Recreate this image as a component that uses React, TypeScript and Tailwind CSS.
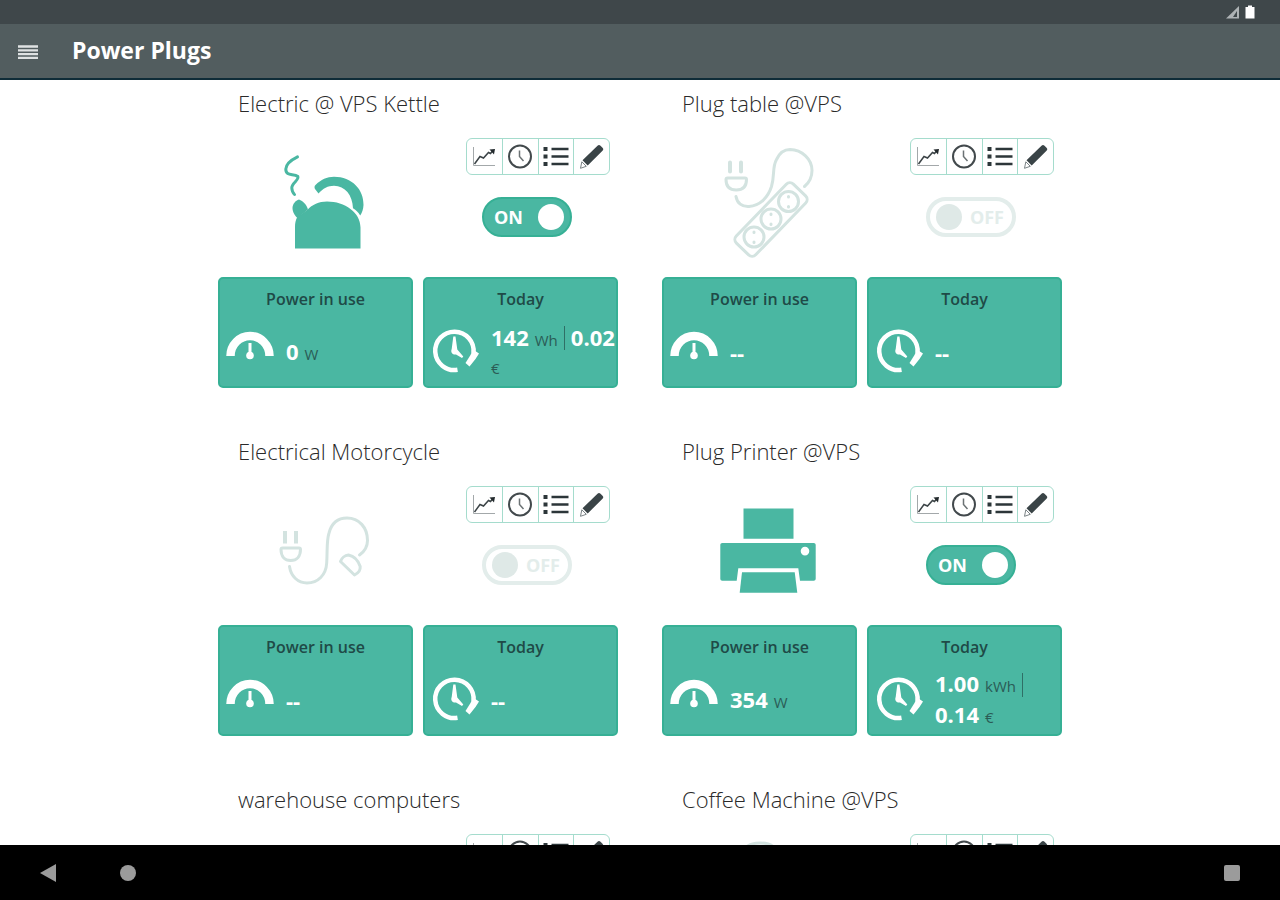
import type { ReactNode } from 'react';

type Part = { value?: string; unit?: string; bar?: boolean };

type Status = { on: boolean; power: Part[][]; today: Part[][] };

// status stays empty until the plug has answered
type Device = { name: string; icon?: ReactNode; status?: Status };

const none: Part[][] = [[{ value: '--' }]];

const Drawing = ({ on, children }: { on: boolean; children: ReactNode }) => (
    <svg viewBox="0 0 120 120" className={`h-[120px] w-[120px] ${on ? 'text-[#4ab7a2]' : 'text-[#d3e3e0]'}`} fill="none" aria-hidden="true">
        {children}
    </svg>
);

const Kettle = () => (
    <Drawing on>
        <path d="M33.5 13.8C27 17 22 21 21.8 26c0 8 8 4 12 7.5C35.5 37 27.5 40 27.8 45c.2 3 1 5 2.700 6.500" stroke="currentColor" strokeWidth="3" strokeLinecap="round" />
        <path d="M31 105.500V84c0-4 .6-7 2.300-10l10-7c5-5.500 11.500-8.500 19.700-8.500 18 0 33.500 11 33.500 26v21z" fill="currentColor" />
        <path d="M35 56.500c4 1.500 7.500 5 9 10L33.500 75c-2.500-2-5-6-5-10 0-4 3-7.500 6.500-8.500z" fill="currentColor" />
        <path
            d="M54.500 50.500 51 46c-.8-1.500-.6-3 .5-4C57 36.500 63 33.700 70 33.700c18 0 30 13 29.500 28.300-.2 4-1.300 7.500-3.300 10.500-1.800-3-4-5.200-7.200-7.200C88.500 52 81 43 70 42.800c-6 0-11 2.700-15.500 7.700z"
            fill="currentColor"
        />
    </Drawing>
);

const PowerStrip = () => (
    <Drawing on={false}>
        <g stroke="currentColor" strokeWidth="3" strokeLinecap="round" strokeLinejoin="round">
            <path d="M22 19.500v9M33 19.500v9" strokeWidth="4" />
            <path d="M19.500 35h17.500c1 0 1.500.6 1.500 1.500C38.500 43 35 47 28.200 47S18 43 18 36.500c0-.9.5-1.500 1.500-1.500z" />
            <path d="M28 53.500c1 6.500 6 10.500 13 10 11-.8 19-9 22.500-20 3.500-12 .5-19 5-27C71.500 10 76 6.500 82 6.500c12 .3 22 9.500 22 21 0 6.500-2.700 12-7.500 16" />
            <rect x="22" y="63" width="82" height="27" rx="5" transform="rotate(-46 63 76.500)" />
            <circle cx="80.500" cy="58.500" r="10" />
            <circle cx="63" cy="76" r="10" />
            <circle cx="46" cy="94" r="10" />
            <path d="M80.500 53.500v.5M80.500 63.500v.5M63 71v.5M63 81v.5M46 89v.5M46 99v.5" />
        </g>
    </Drawing>
);

const ChargingCable = () => (
    <Drawing on={false}>
        <g stroke="currentColor" strokeWidth="3" strokeLinecap="round" strokeLinejoin="round">
            <path d="M21 40v12.500M32 40v12.500" strokeWidth="4" strokeLinecap="butt" />
            <path d="M18.500 57h16.500c1 0 1.500.6 1.500 1.500C36.500 65 33 69.500 26.700 69.500S17 65 17 58.500c0-.9.500-1.500 1.500-1.500z" />
            <path d="M25.500 75.500C27 85.500 34 92 43 92c11 0 19-8 19.700-20C63.500 58 62.500 50 65 42c2.500-9.500 9-15 18-15 12 0 20.500 9.500 20.500 22.500 0 6.500-3 11-8 14.500" />
            <path d="M76.500 70.500 90.500 84c4-2 6-5.500 5.700-8.500C94 69 90 65 84.500 64c-3.500.3-7 3-8 6.500z" />
        </g>
    </Drawing>
);

const PrinterIcon = () => (
    <Drawing on>
        <path d="M35.500 17.500h50v30.200h-50z" fill="currentColor" />
        <path
            fillRule="evenodd"
            d="M14.300 52h91.400c1.200 0 2 .8 2 2v33.700c0 1.200-.8 2-2 2H92l-1.700-12.400h-60l-1.600 12.400H14.300c-1.200 0-2-.8-2-2V54c0-1.200.8-2 2-2zM97 55.800a4.300 4.300 0 1 0 0 8.600 4.300 4.300 0 0 0 0-8.600z"
            fill="currentColor"
        />
        <path d="M34 81.300h52.700l2.600 20.400H31.700z" fill="currentColor" />
    </Drawing>
);

const CoffeeMachine = () => (
    <Drawing on={false}>
        <path d="M36 12C38 6 44 4 52 4s14 2 16 8M28 14h64v18H28zM36 32v66M28 98h64v10H28zM56 62h24v24H56z" stroke="currentColor" strokeWidth="3" />
    </Drawing>
);

const devices: Device[] = [
    {
        name: 'Electric @ VPS Kettle',
        icon: <Kettle />,
        status: {
            on: true,
            power: [[{ value: '0', unit: 'W' }]],
            today: [[{ value: '142', unit: 'Wh' }, { bar: true }, { value: '0.02' }], [{ unit: '€' }]],
        },
    },
    { name: 'Plug table @VPS', icon: <PowerStrip />, status: { on: false, power: none, today: none } },
    { name: 'Electrical Motorcycle', icon: <ChargingCable />, status: { on: false, power: none, today: none } },
    {
        name: 'Plug Printer @VPS',
        icon: <PrinterIcon />,
        status: {
            on: true,
            power: [[{ value: '354', unit: 'W' }]],
            today: [[{ value: '1.00', unit: 'kWh' }, { bar: true }], [{ value: '0.14', unit: '€' }]],
        },
    },
    { name: 'warehouse computers' },
    { name: 'Coffee Machine @VPS', icon: <CoffeeMachine /> },
];

const tools = [
    {
        label: 'Chart',
        icon: (
            <>
                <path d="M2.500 3v18.500H24" stroke="#a3a8aa" />
                <path d="M3.500 20 9 12.500l3.500 1.500 5-5.500 2 1L22 6.500" stroke="#3c4447" strokeWidth="1.500" />
                <path d="m18.500 5.500 5.500-.5-1 5.500z" fill="#22292c" />
            </>
        ),
    },
    {
        label: 'Schedule',
        icon: (
            <>
                <circle cx="13" cy="12.500" r="11" stroke="#42494c" strokeWidth="2" />
                <path d="M12.500 6.500v6l4 4.500" stroke="#6b7274" strokeWidth="1.500" />
            </>
        ),
    },
    {
        label: 'List',
        icon: (
            <>
                <path d="M8.500 5h17M8.500 12.500h17M8.500 20h17" stroke="#2c3639" strokeWidth="2.500" />
                <path d="M.5 5h4M.5 12.500h4M.5 20h4" stroke="#2c3639" strokeWidth="4" />
            </>
        ),
    },
    {
        label: 'Edit',
        icon: (
            <>
                <path d="M18.500 1.700c1-1 2-1 3 0l2 2c1 1 1 2 0 3L8.700 21.500 3.500 16.300z" fill="#3a4447" />
                <path d="m2.800 17.800 4.500 4.500-5.800 2z" fill="#fff" stroke="#7b8386" />
            </>
        ),
    },
];

const GaugeIcon = () => (
    <svg viewBox="0 0 48 48" className="h-12 w-12 shrink-0 text-white" fill="none" aria-hidden="true">
        <path d="M4.500 29a19.500 20 0 0 1 39 0" stroke="currentColor" strokeWidth="8.500" />
        <path d="M24 16v11" stroke="currentColor" strokeWidth="3" />
        <circle cx="24" cy="28.500" r="3.800" fill="currentColor" />
    </svg>
);

const ClockIcon = () => (
    <svg viewBox="0 0 48 48" className="h-12 w-12 shrink-0 text-white" fill="none" aria-hidden="true">
        <path d="M26.500 42.800A19.200 19.200 0 1 1 42.500 26" stroke="currentColor" strokeWidth="4.500" />
        <path d="m42 22.500 6 4-3.500 5.500-6 7.500-4-3.500 5-8z" fill="currentColor" />
        <path d="M22.300 9.500h2.200l1.800 13 6 7-1.300 1.500-6-3.500c-4 .5-5.500-2.500-4.300-5.500z" fill="currentColor" />
    </svg>
);

const Stat = ({ label, icon, lines }: { label: string; icon: ReactNode; lines: Part[][] }) => (
    <div className="h-[111px] overflow-hidden rounded-[5px] border-2 border-[#36b095] bg-[#4ab7a2] px-1.5 pt-1.5">
        <h3 className="text-center text-base leading-7 font-semibold text-[#1f4a47]">{label}</h3>
        <div className="flex h-[76px] items-center gap-3">
            {icon}
            <div className="pt-0.5 whitespace-nowrap">
                {lines.map((line, i) => (
                    <p key={i} className="flex items-baseline gap-1.5 leading-7">
                        {line.map((part, j) => (
                            <span key={j} className={part.bar ? 'h-6 w-px self-center bg-[#2f6f66]' : 'flex items-baseline gap-1.5'}>
                                {part.value && <b className="text-[22px] font-bold text-white">{part.value}</b>}
                                {part.unit && <span className="text-[15px] text-[#2b5c56]">{part.unit}</span>}
                            </span>
                        ))}
                    </p>
                ))}
            </div>
        </div>
    </div>
);

const Toggle = ({ on, name }: { on: boolean; name: string }) => (
    <button
        role="switch"
        aria-checked={on}
        aria-label={name}
        className={
            on
                ? 'ml-4 flex h-10 w-[90px] items-center justify-between rounded-full border-2 border-[#36b095] bg-[#4ab7a2] pr-1.5 pl-2.5 text-lg font-bold text-white'
                : 'ml-4 flex h-10 w-[90px] flex-row-reverse items-center justify-between rounded-full border-4 border-[#e3edeb] bg-white pr-2 pl-1.5 text-lg font-bold text-[#e3edeb]'
        }
    >
        <span>{on ? 'ON' : 'OFF'}</span>
        <span className={on ? 'h-[26px] w-[26px] rounded-full bg-white' : 'h-[26px] w-[26px] rounded-full bg-[#dfe9e7]'} />
    </button>
);

const DeviceCard = ({ device: { name, icon, status } }: { device: Device }) => (
    <section className="mb-10">
        <h2 className="pb-0.5 pl-5 text-[22px] leading-[46px] font-light text-[#2a2a2a]">{name}</h2>
        <div className="flex h-[149px] items-start pr-2 pl-[46px]">
            <div className="pt-[15px]">{icon}</div>
            <div className="ml-auto flex w-36 flex-col items-start gap-[22px] pt-2.5">
                <div className="flex h-[37px] w-full divide-x divide-[#a5dccd] rounded-md border border-[#a5dccd]">
                    {tools.map((tool) => (
                        <button key={tool.label} aria-label={tool.label} className="flex flex-1 items-center justify-center">
                            <svg viewBox="0 0 26 26" className="h-[26px] w-[26px]" fill="none">
                                {tool.icon}
                            </svg>
                        </button>
                    ))}
                </div>
                {status && <Toggle on={status.on} name={name} />}
            </div>
        </div>
        {status && (
            <div className="grid grid-cols-2 gap-2.5">
                <Stat label="Power in use" icon={<GaugeIcon />} lines={status.power} />
                <Stat label="Today" icon={<ClockIcon />} lines={status.today} />
            </div>
        )}
    </section>
);

export default function App() {
    return (
        <div className="flex h-screen flex-col bg-white font-['Open_Sans',sans-serif]">
            <div className="flex h-6 shrink-0 items-center justify-end gap-1 bg-[#3f474a] pr-6">
                <svg viewBox="0 0 14 14" className="h-3.5 w-3.5" aria-hidden="true">
                    <path d="M0 13.500 13 1v12.500z" fill="#aeb3b5" />
                    <path d="m7 12 4-6v6z" fill="#3f474a" />
                </svg>
                <svg viewBox="0 0 12 14" className="h-3.5 w-3" aria-hidden="true">
                    <path d="M1.500 2H4V.5h4V2h2.500v11.500h-9z" fill="#fff" />
                </svg>
            </div>
            <header className="flex h-14 shrink-0 items-center gap-[34px] border-b-2 border-[#0f2c38] bg-[#525d5f] pl-[18px]">
                <button aria-label="Menu">
                    <svg viewBox="0 0 20 18" className="h-[18px] w-5" aria-hidden="true">
                        <path d="M0 4.500h20M0 8.300h20M0 12.100h20M0 15.900h20" stroke="#dfe2e3" strokeWidth="2.300" />
                    </svg>
                </button>
                <h1 className="pb-0.5 text-[23px] leading-7 font-bold text-white">Power Plugs</h1>
            </header>
            <main className="min-h-0 flex-1 overflow-y-auto [scrollbar-width:none]">
                <div className="mx-auto grid max-w-[844px] grid-cols-2 gap-x-11">
                    {devices.map((device) => (
                        <DeviceCard key={device.name} device={device} />
                    ))}
                </div>
            </main>
            <nav className="flex h-[55px] shrink-0 items-center bg-black px-10 text-[#9b9b9b]">
                <button aria-label="Back">
                    <svg viewBox="0 0 16 18" className="h-[18px] w-4">
                        <path d="M0 9 16 0v18z" fill="currentColor" />
                    </svg>
                </button>
                <button aria-label="Home" className="ml-16 h-4 w-4 rounded-full bg-[#9b9b9b]" />
                <button aria-label="Recent apps" className="ml-auto h-4 w-4 rounded-xs bg-[#9b9b9b]" />
            </nav>
        </div>
    );
}
